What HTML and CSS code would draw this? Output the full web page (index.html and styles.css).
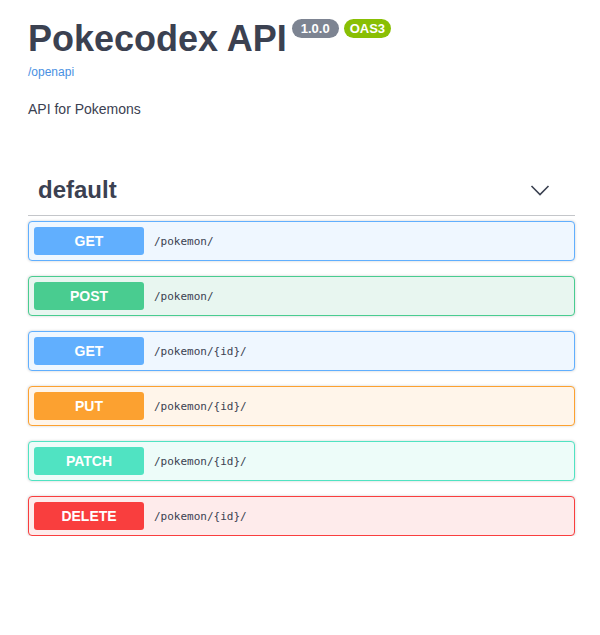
FILE: index.html
```html
<!DOCTYPE html>
<html lang="en">
<head>
<meta charset="utf-8">
<title>Pokecodex API</title>
<link rel="stylesheet" href="styles.css">
</head>
<body>
<div class="wrapper">
  <div class="info">
    <div class="title-row">
      <h1 class="title">Pokecodex API</h1>
      <span class="badge badge-version">1.0.0</span>
      <span class="badge badge-oas">OAS3</span>
    </div>
    <a class="link" href="#">/openapi</a>
    <p class="desc">API for Pokemons</p>
  </div>

  <div class="tag-section">
    <div class="tag-header">
      <h3 class="tag-name">default</h3>
      <svg class="arrow" width="20" height="20" viewBox="0 0 20 20"><polyline points="1.5,6 10,14.5 18.5,6" fill="none" stroke="#3b4151" stroke-width="1.6"/></svg>
    </div>
    <div class="ops">
      <div class="op op-get"><span class="method">GET</span><span class="path">/pokemon/</span></div>
      <div class="op op-post"><span class="method">POST</span><span class="path">/pokemon/</span></div>
      <div class="op op-get"><span class="method">GET</span><span class="path">/pokemon/{id}/</span></div>
      <div class="op op-put"><span class="method">PUT</span><span class="path">/pokemon/{id}/</span></div>
      <div class="op op-patch"><span class="method">PATCH</span><span class="path">/pokemon/{id}/</span></div>
      <div class="op op-delete"><span class="method">DELETE</span><span class="path">/pokemon/{id}/</span></div>
    </div>
  </div>
</div>
</body>
</html>
```

FILE: styles.css
```css
html, body {
  margin: 0;
  padding: 0;
  background: #fff;
}
body {
  font-family: "Liberation Sans", Arial, sans-serif;
  color: #3b4151;
}
.wrapper {
  padding: 18px 25px 0 28px;
}
.title-row {
  display: flex;
  align-items: flex-start;
}
.title {
  margin: 0;
  font-size: 36px;
  line-height: 42px;
  font-weight: bold;
  color: #3b4151;
}
.badge {
  display: inline-block;
  margin: 1px 0 0 5px;
  padding: 2px 6px;
  border-radius: 57px;
  color: #fff;
  font-size: 13px;
  line-height: 15px;
  font-weight: bold;
}
.badge-version {
  background: #7d8492;
  padding: 2px 9px;
}
.badge-oas {
  background: #89bf04;
  margin-left: 5px;
}
.link {
  display: block;
  margin-top: 5px;
  font-size: 12px;
  line-height: 14px;
  color: #4990e2;
  text-decoration: none;
}
.desc {
  margin: 22px 0 0;
  font-size: 14px;
  line-height: 16px;
  color: #3b4151;
}
.tag-section {
  margin-top: 53px;
}
.tag-header {
  display: flex;
  align-items: center;
  justify-content: space-between;
  padding: 6px 25px 11px 10px;
  border-bottom: 1px solid rgba(59, 65, 81, 0.3);
}
.tag-name {
  margin: 0;
  font-size: 24px;
  line-height: 28px;
  font-weight: bold;
}
.arrow {
  display: block;
}
.ops {
  display: flex;
  flex-direction: column;
  gap: 15px;
  margin-top: 5px;
}
.op {
  display: flex;
  align-items: center;
  padding: 5px;
  border: 1px solid;
  border-radius: 4px;
  box-shadow: 0 0 3px rgba(0, 0, 0, 0.19);
}
.method {
  width: 110px;
  padding: 6px 0;
  border-radius: 3px;
  text-align: center;
  color: #fff;
  font-size: 14px;
  line-height: 16px;
  font-weight: bold;
}
.path {
  padding-left: 10px;
  font-family: "DejaVu Sans Mono", monospace;
  font-size: 11px;
  font-weight: normal;
  color: #3b4151;
}
.op-get { border-color: #61affe; background: #eff7ff; }
.op-get .method { background: #61affe; }
.op-post { border-color: #49cc90; background: #e8f6f0; }
.op-post .method { background: #49cc90; }
.op-put { border-color: #fca130; background: #fff5ea; }
.op-put .method { background: #fca130; }
.op-patch { border-color: #50e3c2; background: #edfcf9; }
.op-patch .method { background: #50e3c2; }
.op-delete { border-color: #f93e3e; background: #feebeb; }
.op-delete .method { background: #f93e3e; }
```
